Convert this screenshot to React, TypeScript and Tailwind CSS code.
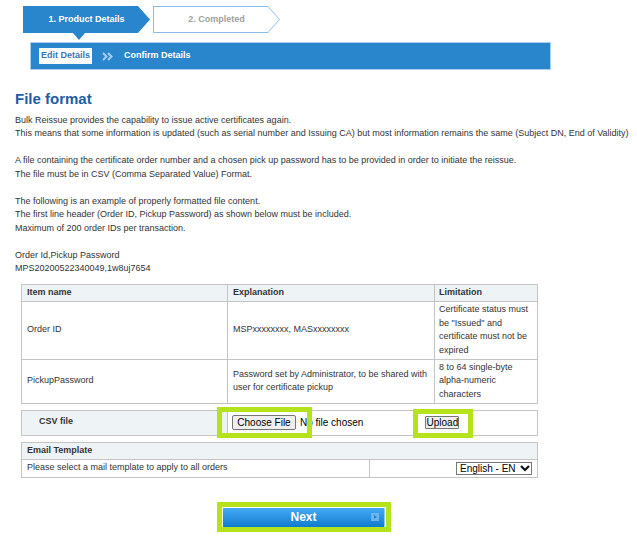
import React from "react";

export default function App() {
  return (
    <div className="relative w-[637px] h-[547px] overflow-hidden bg-white font-['Liberation_Sans',Arial,sans-serif] text-[9px] text-[#333333]">
      {/* Steps */}
      <div className="flex ml-[23px] pt-[6px] gap-[3px]">
        <div className="relative w-[127px] h-[27px]">
          <div className="w-full h-full bg-[#2a86cc] [clip-path:polygon(0_0,115px_0,127px_50%,115px_100%,0_100%)] flex items-center justify-center text-white font-bold text-[9px]">
            1. Product Details
          </div>
          <div className="absolute top-[27px] left-[50px] w-0 h-0 border-l-[6px] border-r-[6px] border-t-[7px] border-l-transparent border-r-transparent border-t-[#2a86cc]" />
        </div>
        <div className="w-[127px] h-[27px] bg-[#8cbde8] [clip-path:polygon(0_0,115px_0,127px_50%,115px_100%,0_100%)] p-[1px]">
          <div className="w-full h-full bg-white [clip-path:polygon(0_0,114px_0,125px_50%,114px_100%,0_100%)] flex items-center justify-center text-[#a0a0a0] font-bold text-[9px]">
            2. Completed
          </div>
        </div>
      </div>

      {/* Sub bar */}
      <div className="mt-[9px] ml-[30px] w-[521px] h-[28px] bg-[#2a86cc] border border-[#a9d1ef] flex items-center pl-[8px]">
        <div className="h-[16px] px-[2px] bg-white flex items-center text-[#3a75b5] font-bold">Edit Details</div>
        <svg className="ml-[10px]" width="11" height="9" viewBox="0 0 11 9">
          <polyline points="1,1 4.5,4.5 1,8" fill="none" stroke="#a6cdf0" strokeWidth="2" />
          <polyline points="6,1 9.5,4.5 6,8" fill="none" stroke="#a6cdf0" strokeWidth="2" />
        </svg>
        <div className="ml-[11px] text-white font-bold">Confirm Details</div>
      </div>

      {/* Heading */}
      <h1 className="mt-[20px] ml-[15px] text-[15px] leading-[18px] font-bold text-[#1d5ea5]">File format</h1>

      <div className="mt-[5.5px] ml-[15px] leading-[13.5px] whitespace-nowrap">
        <p>Bulk Reissue provides the capability to issue active certificates again.</p>
        <p>This means that some information is updated (such as serial number and Issuing CA) but most information remains the same (Subject DN, End of Validity)</p>
        <p className="mt-[13.5px]">A file containing the certificate order number and a chosen pick up password has to be provided in order to initiate the reissue.</p>
        <p>The file must be in CSV (Comma Separated Value) Format.</p>
        <p className="mt-[13.5px]">The following is an example of properly formatted file content.</p>
        <p>The first line header (Order ID, Pickup Password) as shown below must be included.</p>
        <p>Maximum of 200 order IDs per transaction.</p>
        <p className="mt-[13.5px]">Order Id,Pickup Password</p>
        <p>MPS20200522340049,1w8uj7654</p>
      </div>

      {/* Main table */}
      <table className="mt-[8px] ml-[21px] w-[516px] border-collapse table-fixed leading-[13.5px]">
        <colgroup>
          <col className="w-[206px]" />
          <col className="w-[207px]" />
          <col className="w-[103px]" />
        </colgroup>
        <thead>
          <tr className="h-[17px] bg-[#eef3f6]">
            <th className="border border-[#c4c4c4] text-left font-bold px-[5px] py-0">Item name</th>
            <th className="border border-[#c4c4c4] text-left font-bold px-[5px] py-0">Explanation</th>
            <th className="border border-[#c4c4c4] text-left font-bold px-[4px] py-0">Limitation</th>
          </tr>
        </thead>
        <tbody>
          <tr className="h-[58px]">
            <td className="border border-[#c4c4c4] px-[5px] align-middle">Order ID</td>
            <td className="border border-[#c4c4c4] px-[5px] align-middle">MSPxxxxxxxx, MASxxxxxxxx</td>
            <td className="border border-[#c4c4c4] px-[4px] align-middle whitespace-nowrap">
              Certificate status must<br />be "Issued" and<br />certificate must not be<br />expired
            </td>
          </tr>
          <tr className="h-[44px]">
            <td className="border border-[#c4c4c4] px-[5px] align-middle">PickupPassword</td>
            <td className="border border-[#c4c4c4] px-[5px] align-middle whitespace-nowrap">
              Password set by Administrator, to be shared with<br />user for certificate pickup
            </td>
            <td className="border border-[#c4c4c4] px-[4px] align-middle whitespace-nowrap">
              8 to 64 single-byte<br />alpha-numeric<br />characters
            </td>
          </tr>
        </tbody>
      </table>

      {/* CSV table */}
      <table className="mt-[6px] ml-[21px] w-[516px] border-collapse table-fixed">
        <colgroup>
          <col className="w-[206px]" />
          <col className="w-[310px]" />
        </colgroup>
        <tbody>
          <tr className="h-[25px]">
            <td className="border border-[#c4c4c4] bg-[#eef3f6] pl-[17px] font-bold align-middle pb-[2px]">CSV file</td>
            <td className="border border-[#c4c4c4] bg-white pl-[4px] align-middle">
              <div className="flex items-center text-[10px] text-black">
                <div className="h-[15px] w-[64px] flex items-center justify-center bg-[#efefef] border border-[#767676] rounded-[2px]">Choose File</div>
                <span className="ml-[4px]">No file chosen</span>
                <div className="ml-[62px] h-[13px] w-[34px] flex items-center justify-center bg-[#efefef] border border-[#767676] rounded-[1px]">Upload</div>
              </div>
            </td>
          </tr>
        </tbody>
      </table>

      {/* Email template table */}
      <table className="mt-[6px] ml-[21px] w-[516px] border-collapse table-fixed">
        <colgroup>
          <col className="w-[348px]" />
          <col className="w-[168px]" />
        </colgroup>
        <tbody>
          <tr className="h-[17px] bg-[#eef3f6]">
            <td colSpan={2} className="border border-[#c4c4c4] px-[5px] font-bold align-middle">Email Template</td>
          </tr>
          <tr className="h-[18px]">
            <td className="border border-[#c4c4c4] px-[5px] align-middle">Please select a mail template to apply to all orders</td>
            <td className="border border-[#c4c4c4] pr-[5px] align-middle">
              <div className="flex justify-end">
                <div className="h-[13px] w-[76px] border border-[#767676] flex items-center pl-[3px] text-[10px] text-black">
                  <span>English - EN</span>
                  <svg className="ml-[4px]" width="10" height="7" viewBox="0 0 10 7">
                    <polyline points="1,1 5,5 9,1" fill="none" stroke="#111" strokeWidth="2.2" />
                  </svg>
                </div>
              </div>
            </td>
          </tr>
        </tbody>
      </table>

      {/* Next button */}
      <div className="mt-[30px] ml-[223px] w-[162px] h-[19px] bg-gradient-to-b from-[#43aaf6] to-[#0a7ccd] border-r border-[#8ccaf5] relative flex items-center justify-center">
        <span className="text-white font-bold text-[12px]">Next</span>
        <div className="absolute right-[5px] top-[5px] w-[8px] h-[8px] bg-[#6db5ec] flex items-center justify-center">
          <div className="w-0 h-0 border-t-[2px] border-b-[2px] border-l-[3px] border-t-transparent border-b-transparent border-l-[#2a7fc8]" />
        </div>
      </div>

      {/* Green highlight frames */}
      <div className="absolute left-[217px] top-[407px] w-[95px] h-[31px] border-[5px] border-[#b4e21d]" />
      <div className="absolute left-[413px] top-[409px] w-[60px] h-[29px] border-[5px] border-[#b4e21d]" />
      <div className="absolute left-[217px] top-[502px] w-[174px] h-[30px] border-[5px] border-[#b4e21d]" />
    </div>
  );
}
